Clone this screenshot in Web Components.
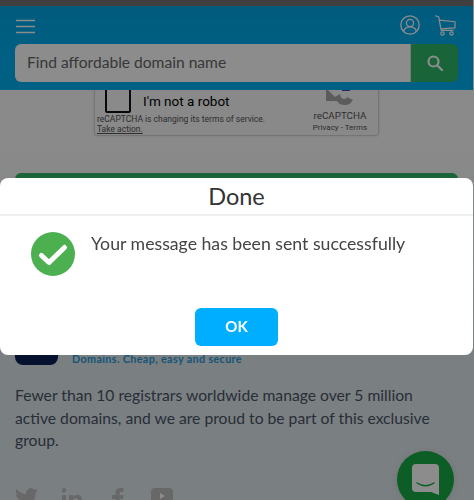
<!DOCTYPE html>
<html>
<head>
<meta charset="utf-8">
<style>
  html, body { margin: 0; height: 500px; overflow: hidden; }
  body {
    background: linear-gradient(#fbfbfb 150px, #dfe7ec 340px);
    font-family: Lato, "Noto Sans", sans-serif;
    color: #333;
  }
</style>
</head>
<body>
<site-header></site-header>
<main-content></main-content>
<chat-button></chat-button>
<done-modal heading="Done" message="Your message has been sent successfully"></done-modal>

<script>
class SiteHeader extends HTMLElement {
  constructor() {
    super();
    this.attachShadow({ mode: 'open' });
    this.shadowRoot.innerHTML = `
      <style>
        :host {
          display: block;
          position: relative;
          z-index: 2;
          width: 473px;
          background: linear-gradient(#00a6e6, #00aeef 60%, #00b0f2);
          border-top: 6px solid #747474;
          box-sizing: border-box;
          height: 90px;
          padding: 9px 15px 0;
        }
        .top {
          display: flex;
          justify-content: space-between;
          align-items: flex-start;
          height: 29px;
        }
        .right { display: flex; gap: 15px; margin-right: 2px; }
        svg { display: block; fill: none; stroke: #fff; }
        .search { display: flex; height: 38px; }
        .field {
          flex: 1;
          background: #fff;
          border-radius: 6px 0 0 6px;
          padding-left: 12px;
          font-size: 15.6px;
          line-height: 36px;
          color: #666;
          border-right: 1px solid #ddd;
        }
        .go {
          width: 47px;
          background: #2fb868;
          border-radius: 0 6px 6px 0;
          display: flex;
          align-items: center;
          justify-content: center;
        }
      </style>
      <div class="top">
        <svg width="20" height="18" viewBox="0 0 20 18" stroke-width="1.5" style="margin:3px 0 0 1px">
          <path d="M0 2.500h19M0 8.500h19M0 14.500h19"/>
        </svg>
        <div class="right">
          <svg width="20" height="20" viewBox="0 0 20 20" stroke-width="1.3">
            <circle cx="10" cy="10" r="9.200"/>
            <circle cx="10" cy="8" r="3.600"/>
            <path d="M3.600 16.500c.8-3.200 3.400-4.600 6.400-4.600s5.600 1.400 6.400 4.600"/>
          </svg>
          <svg width="21" height="22" viewBox="0 0 21 22" stroke-width="1.2">
            <path d="M0 .7l3.600 1.100 2.600 13.600h12.400M4.400 5.200l15.600 1.500v6.200L5.700 13.800"/>
            <circle cx="7.500" cy="18.500" r="1.700"/>
            <circle cx="16.500" cy="18.500" r="1.700"/>
          </svg>
        </div>
      </div>
      <div class="search">
        <div class="field">Find affordable domain name</div>
        <div class="go">
          <svg width="16" height="16" viewBox="0 0 16 16" stroke-width="2.200">
            <circle cx="6.500" cy="6.500" r="5"/>
            <path d="M10.200 10.200l5 5" stroke-linecap="round"/>
          </svg>
        </div>
      </div>
    `;
  }
}

class RecaptchaBox extends HTMLElement {
  constructor() {
    super();
    this.attachShadow({ mode: 'open' });
    this.shadowRoot.innerHTML = `
      <style>
        :host {
          display: flex;
          justify-content: space-between;
          box-sizing: border-box;
          width: 285px;
          height: 74px;
          margin: 0 auto;
          background: #f9f9f9;
          border: 1px solid #d3d3d3;
          border-radius: 3px;
          box-shadow: 0 0 3px rgba(0,0,0,.12);
          font-family: Roboto, sans-serif;
          color: #000;
        }
        .left { width: 205px; padding: 23px 0 0 2px; }
        .row { display: flex; align-items: center; gap: 12px; margin-left: 8px; height: 26px; }
        .box { box-sizing: border-box; width: 26px; height: 27px; border: 2px solid #111; border-radius: 2px; background: #fcfcfc; }
        .label { font-size: 13.500px; padding-top: 4px; }
        .note { font-size: 8.500px; line-height: 10px; color: #555; margin-top: 2px; }
        .note u { display: block; }
        .brand { width: 76px; text-align: center; color: #555; padding-top: 16px; }
        .brand svg { display: block; margin: 0 auto; }
        .name { font-size: 9.800px; line-height: 12px; margin-top: 3px; }
        .links { font-size: 8px; line-height: 10px; margin-top: 1px; }
      </style>
      <div class="left">
        <div class="row"><span class="box"></span><span class="label">I'm not a robot</span></div>
        <div class="note">reCAPTCHA is changing its terms of service.<u>Take action.</u></div>
      </div>
      <div class="brand">
        <svg width="30" height="28" viewBox="0 0 30 28">
          <path d="M1 9v13h11c2 3 4 4 8 4 4 0 6-2 8-5l-6-3c-1 2-2 2-3 2-2 0-4-2-4-5l-5 3z" fill="#a6a6a6"/>
          <path d="M17 9h8v3h-8z" fill="#2a4fc0"/>
        </svg>
        <div class="name">reCAPTCHA</div>
        <div class="links">Privacy - Terms</div>
      </div>
    `;
  }
}

class BrandBlurb extends HTMLElement {
  constructor() {
    super();
    this.attachShadow({ mode: 'open' });
    this.shadowRoot.innerHTML = `
      <style>
        :host { display: block; }
        .brand { display: flex; gap: 14px; align-items: flex-end; }
        .logo { width: 43px; height: 43px; border-radius: 8px; background: #0a1f55; }
        .tag { font-size: 10.800px; font-weight: 700; color: #2a9ad8; line-height: 14px; letter-spacing: .35px; margin-bottom: -1px; }
        p { margin: 19px 0 0; max-width: 425px; font-size: 15.700px; line-height: 22.700px; color: #4a5566; }
        .social { display: flex; margin-top: 36px; }
        svg { display: block; fill: #bdbdbd; flex: none; }
      </style>
      <div class="brand">
        <div class="logo"></div>
        <div class="tag">Domains. Cheap, easy and secure</div>
      </div>
      <p>Fewer than 10 registrars worldwide manage over 5 million active domains, and we are proud to be part of this exclusive group.</p>
      <div class="social">
        <svg width="23" height="20" viewBox="0 0 23 20"><path d="M23 2.400c-.8.4-1.700.6-2.700.8 1-.6 1.700-1.500 2-2.600-.9.500-1.900.9-3 1.100a4.700 4.700 0 0 0-8 4.300C7.400 5.800 4 4 1.600.9c-1.300 2.200-.6 4.900 1.400 6.300-.7 0-1.400-.2-2.100-.6 0 2.300 1.600 4.200 3.800 4.700-.7.2-1.400.2-2.100.1.600 1.900 2.300 3.200 4.400 3.300A9.500 9.500 0 0 1 0 16.600 13.400 13.400 0 0 0 20.600 4.700c1-.7 1.800-1.500 2.400-2.300z"/></svg>
        <svg width="20" height="20" viewBox="0 0 20 20" style="margin-left:24px"><path d="M0 7h4v13H0zM2 0a2.300 2.300 0 1 1 0 4.600A2.300 2.300 0 0 1 2 0zM7 7h4v2c1-1.500 2.400-2.300 4-2.300 3.400 0 5 2 5 5.800V20h-4v-7c0-1.800-.8-3-2.300-3-1.600 0-2.700 1.200-2.700 3v7H7z"/></svg>
        <svg width="12" height="20" viewBox="0 0 12 20" style="margin-left:30px"><path d="M3.500 20v-9H0V7h3.500V4.500C3.500 1.500 5.500 0 8 0h3.500v3.700H9.300c-1 0-1.600.6-1.600 1.500V7h3.800l-.6 4H7.700v9z"/></svg>
        <svg width="22" height="20" viewBox="0 0 22 20" style="margin-left:27px"><rect width="22" height="16" rx="4"/><path d="M9 5l5 3-5 3z" fill="#fff"/></svg>
      </div>
    `;
  }
}

class MainContent extends HTMLElement {
  constructor() {
    super();
    this.attachShadow({ mode: 'open' });
    this.shadowRoot.innerHTML = `
      <style>
        :host {
          display: block;
          position: relative;
          width: 473px;
          box-sizing: border-box;
          padding: 0 15px;
          margin-top: -28px;
        }
        .send {
          height: 40px;
          margin-top: 37px;
          background: #2fb868;
          border-radius: 6px;
        }
        brand-blurb { margin-top: 109px; }
      </style>
      <recaptcha-box></recaptcha-box>
      <div class="send"></div>
      <brand-blurb></brand-blurb>
    `;
  }
}

class ChatButton extends HTMLElement {
  constructor() {
    super();
    this.attachShadow({ mode: 'open' });
    this.shadowRoot.innerHTML = `
      <style>
        :host {
          display: flex;
          align-items: center;
          justify-content: center;
          position: fixed;
          left: 397px;
          top: 451px;
          width: 57px;
          height: 57px;
          border-radius: 50%;
          background: #16ab45;
          box-shadow: 0 1px 8px rgba(0,0,0,.1);
        }
        svg { display: block; }
      </style>
      <svg width="27" height="31" viewBox="0 0 27 31" style="margin-top:-1px">
        <path d="M4 0h19a4 4 0 0 1 4 4v27l-8-3H4a4 4 0 0 1-4-4V4a4 4 0 0 1 4-4z" fill="#fff"/>
        <path d="M5 19c5 3.500 12 3.500 17 0" fill="none" stroke="#16ab45" stroke-width="1.500" stroke-linecap="round"/>
      </svg>
    `;
  }
}

class DoneModal extends HTMLElement {
  constructor() {
    super();
    this.attachShadow({ mode: 'open' });
    const heading = this.getAttribute('heading');
    const message = this.getAttribute('message');
    this.shadowRoot.innerHTML = `
      <style>
        :host {
          display: block;
          position: fixed;
          inset: 0;
          z-index: 5;
          background: rgba(0,0,0,.45);
        }
        .dialog {
          position: absolute;
          left: 0;
          top: 178px;
          width: 473px;
          height: 177px;
          background: #fff;
          border-radius: 8px;
          display: flex;
          flex-direction: column;
          color: #333;
        }
        .title {
          height: 36px;
          border-bottom: 2px solid #eee;
          text-align: center;
          font-size: 23.500px;
          line-height: 36px;
        }
        .body {
          display: flex;
          gap: 16px;
          padding: 16px 0 0 31px;
          height: 91px;
          box-sizing: border-box;
        }
        svg { display: block; flex: none; }
        .msg { font-size: 17.700px; line-height: 24px; color: #444; }
        .actions { display: flex; justify-content: center; }
        button {
          width: 83px;
          height: 38px;
          margin-top: 1px;
          border: 0;
          border-radius: 6px;
          background: #00aeff;
          color: #fff;
          font: 700 15px Lato, "Noto Sans", sans-serif;
          padding: 0 0 3px;
        }
      </style>
      <div class="dialog">
        <div class="title">${heading}</div>
        <div class="body">
          <svg width="44" height="44" viewBox="0 0 44 44">
            <circle cx="22" cy="22" r="22" fill="#4caf50"/>
            <path d="M10.500 23.500l7.500 7 15.500-15" fill="none" stroke="#fff" stroke-width="5" stroke-linecap="round" stroke-linejoin="round"/>
          </svg>
          <div class="msg">${message}</div>
        </div>
        <div class="actions"><button>OK</button></div>
      </div>
    `;
  }
}

customElements.define('site-header', SiteHeader);
customElements.define('recaptcha-box', RecaptchaBox);
customElements.define('brand-blurb', BrandBlurb);
customElements.define('main-content', MainContent);
customElements.define('chat-button', ChatButton);
customElements.define('done-modal', DoneModal);
</script>
</body>
</html>
